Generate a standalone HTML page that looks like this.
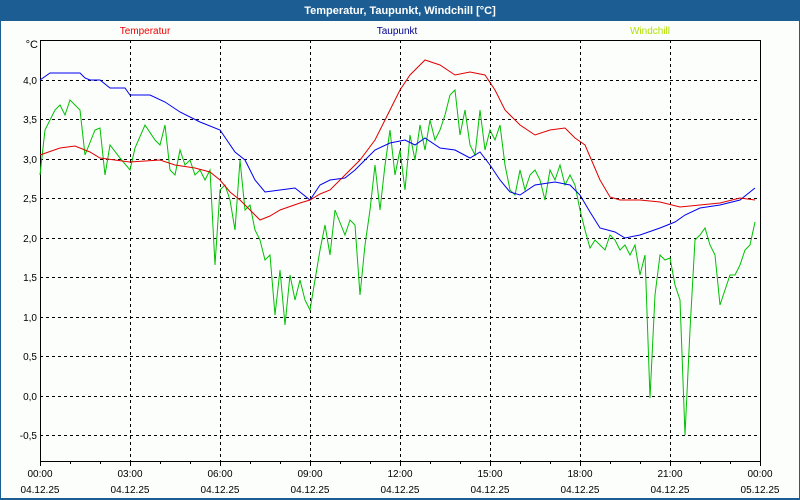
<!DOCTYPE html><html><head><style>
html,body{margin:0;padding:0;width:800px;height:500px;overflow:hidden;background:#1c5e94;font-family:"Liberation Sans",sans-serif}
svg{display:block}
</style></head><body>
<svg width="800" height="500" xmlns="http://www.w3.org/2000/svg" font-family="Liberation Sans, sans-serif" font-size="10">
<rect x="0" y="0" width="800" height="500" fill="#1c5e94"/>
<rect x="1" y="21" width="798" height="477" fill="#fcfefc"/>
<text x="400" y="14" fill="#fff" font-weight="bold" font-size="11" text-anchor="middle">Temperatur, Taupunkt, Windchill [°C]</text>
<text x="145" y="34" fill="#f00000" text-anchor="middle">Temperatur</text>
<text x="397" y="34" fill="#000090" text-anchor="middle">Taupunkt</text>
<text x="650" y="34" fill="#b0e000" text-anchor="middle">Windchill</text>
<text x="38" y="48" text-anchor="end" font-size="11">°C</text>
<g stroke="#000" stroke-dasharray="3,3" stroke-width="1">
<line x1="40" x2="760" y1="80.5" y2="80.5"/><line x1="40" x2="760" y1="119.5" y2="119.5"/><line x1="40" x2="760" y1="159.5" y2="159.5"/><line x1="40" x2="760" y1="198.5" y2="198.5"/><line x1="40" x2="760" y1="238.5" y2="238.5"/><line x1="40" x2="760" y1="277.5" y2="277.5"/><line x1="40" x2="760" y1="317.5" y2="317.5"/><line x1="40" x2="760" y1="356.5" y2="356.5"/><line x1="40" x2="760" y1="396.5" y2="396.5"/><line x1="40" x2="760" y1="435.5" y2="435.5"/>
<line y1="40" y2="461" x1="130.5" x2="130.5"/><line y1="40" y2="461" x1="220.5" x2="220.5"/><line y1="40" y2="461" x1="310.5" x2="310.5"/><line y1="40" y2="461" x1="400.5" x2="400.5"/><line y1="40" y2="461" x1="490.5" x2="490.5"/><line y1="40" y2="461" x1="580.5" x2="580.5"/><line y1="40" y2="461" x1="670.5" x2="670.5"/>
</g>
<rect x="40.5" y="40.5" width="720" height="421" fill="none" stroke="#000"/>
<g stroke="#000">
<path d="M40.5 461v5M70.5 461v3M100.5 461v3M130.5 461v5M160.5 461v3M190.5 461v3M220.5 461v5M250.5 461v3M280.5 461v3M310.5 461v5M340.5 461v3M370.5 461v3M400.5 461v5M430.5 461v3M460.5 461v3M490.5 461v5M520.5 461v3M550.5 461v3M580.5 461v5M610.5 461v3M640.5 461v3M670.5 461v5M700.5 461v3M730.5 461v3M760.5 461v5"/>
</g>
<g text-anchor="end" fill="#000">
<text x="37" y="84">4,0</text><text x="37" y="123">3,5</text><text x="37" y="163">3,0</text><text x="37" y="202">2,5</text><text x="37" y="242">2,0</text><text x="37" y="281">1,5</text><text x="37" y="321">1,0</text><text x="37" y="360">0,5</text><text x="37" y="400">0,0</text><text x="37" y="439">-0,5</text>
</g>
<g text-anchor="middle" fill="#000">
<text x="40" y="477">00:00</text><text x="130" y="477">03:00</text><text x="220" y="477">06:00</text><text x="310" y="477">09:00</text><text x="400" y="477">12:00</text><text x="490" y="477">15:00</text><text x="580" y="477">18:00</text><text x="670" y="477">21:00</text><text x="760" y="477">00:00</text>
<text x="40" y="493">04.12.25</text><text x="130" y="493">04.12.25</text><text x="220" y="493">04.12.25</text><text x="310" y="493">04.12.25</text><text x="400" y="493">04.12.25</text><text x="490" y="493">04.12.25</text><text x="580" y="493">04.12.25</text><text x="670" y="493">04.12.25</text><text x="760" y="493">05.12.25</text>
</g>
<g fill="none" stroke-width="1">
<polyline stroke="#00c000" points="40,175 45,130 55,110 60,105 65,115 70,100 80,110 85,155 95,130 100,128 105,175 110,145 120,158 130,170 135,148 145,125 155,140 160,145 165,125 170,170 175,175 180,150 185,165 190,160 195,175 200,170 205,180 210,170 215,265 220,190 225,185 230,200 235,230 240,160 245,210 250,205 255,230 260,240 265,260 270,255 275,315 280,270 285,325 290,275 295,300 300,280 305,300 310,310 315,280 320,250 325,225 330,255 335,210 345,235 350,220 355,225 360,295 365,245 370,210 375,165 380,210 385,165 390,130 395,175 400,150 405,190 410,135 415,160 420,125 425,150 430,120 435,140 440,130 445,115 450,95 455,90 460,135 465,110 470,145 475,155 480,110 485,150 490,130 495,140 500,125 505,165 510,190 515,195 520,170 525,190 530,175 535,170 540,180 545,200 550,170 555,180 560,165 565,185 570,175 575,185 580,210 585,230 590,248 595,240 600,245 605,250 610,235 615,240 620,250 625,245 630,255 635,245 640,275 645,255 650,398 655,295 660,255 665,260 670,258 675,285 680,300 685,435 690,330 695,240 700,235 705,228 710,245 715,255 720,305 725,290 730,275 735,275 740,265 745,250 750,245 755,222"/>
<polyline stroke="#0000f0" points="40,80 50,73 80,73 85,78 90,80 100,80 110,88 125,88 130,95 150,95 165,102 180,112 200,122 220,130 235,152 245,160 255,180 265,192 280,190 295,188 310,200 320,185 330,180 345,178 355,170 365,160 375,150 390,143 405,140 415,145 425,138 440,148 455,150 470,158 480,152 490,165 500,180 510,192 520,195 535,185 555,182 570,185 580,195 590,212 600,228 615,232 625,238 640,235 660,228 675,222 685,215 700,208 720,205 740,200 755,188"/>
<polyline stroke="#e00000" points="40,155 60,148 75,146 90,152 100,158 130,162 160,160 175,165 195,168 210,172 220,180 230,192 240,200 250,210 260,220 270,216 280,210 300,203 310,200 320,194 330,190 345,175 360,160 375,140 390,110 400,90 410,75 425,60 440,65 455,75 470,72 485,75 495,90 505,110 520,125 535,135 550,130 565,128 575,138 585,145 600,180 610,197 620,200 640,200 660,202 680,207 700,205 720,203 740,198 755,200"/>
</g>
</svg>
</body></html>
